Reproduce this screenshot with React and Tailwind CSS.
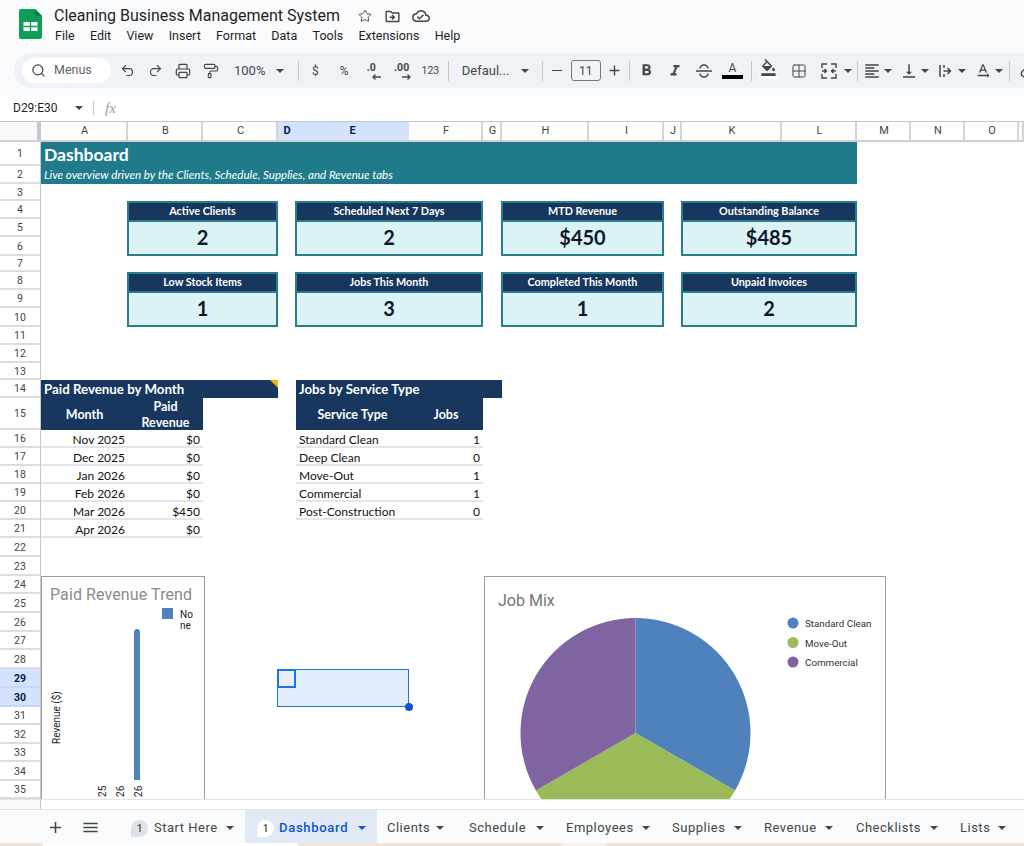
import React from "react";
import { Undo2, Redo2, Printer, PaintRoller, Search, Star, Grid2x2 } from "lucide-react";
import {
  MdOutlineDriveFileMove, MdOutlineCloudDone, MdFormatBold, MdFormatItalic, MdOutlineFormatColorFill,
  MdFormatAlignLeft, MdVerticalAlignBottom, MdTextRotationNone, MdAdd, MdMenu, MdLink,
} from "react-icons/md";

const Caret = ({ className = "text-[#444746]" }) => (
  <svg width="8" height="4" viewBox="0 0 8 4" className={"shrink-0 fill-current " + className}><path d="M0 0h8L4 4z" /></svg>
);
const Sep = ({ className }) => <div className={"w-px h-[20px] bg-[#c7c7c7] shrink-0 " + className} />;
const Box = ({ className = "w-[28px]", children }) => (
  <div className={"flex items-center justify-center shrink-0 h-full " + className}>{children}</div>
);

const MENUS = ["File", "Edit", "View", "Insert", "Format", "Data", "Tools", "Extensions", "Help"];
const ROWS = Array.from({ length: 35 }, (_, i) => i + 1);
const COLS = ["A", "B", "C", "D", "E", "F", "G", "H", "I", "J", "K", "L", "M", "N", "O", ""];

const MergeIcon = () => (
  <svg width="18" height="18" viewBox="0 0 18 18" fill="none" stroke="currentColor" strokeWidth="1.4">
    <path d="M2 6V2h5M11 2h5v4M2 12v4h5M11 16h5v-4" />
    <path d="M2 9h4M4.500 7l2 2-2 2M16 9h-4M13.500 7l-2 2 2 2" />
  </svg>
);
const StrikeIcon = () => (
  <svg width="20" height="18" viewBox="0 0 20 18" fill="none" stroke="currentColor" strokeWidth="1.5">
    <path d="M2 9h16M6 6.500a4 3.500 0 0 1 8 0M6 11.500a4 3.500 0 0 0 8 0" />
  </svg>
);
const WrapIcon = () => (
  <svg width="18" height="18" viewBox="0 0 18 18" fill="none" stroke="currentColor" strokeWidth="1.5">
    <path d="M3 3v12M6.500 9h7M10.500 6l3 3-3 3M7 3v3M7 12v3" />
  </svg>
);
const DecArrow = ({ dir }) => (
  <svg width="9" height="6" viewBox="0 0 9 6" fill="none" stroke="currentColor" strokeWidth="1.3" className="absolute bottom-[-6px] right-[-2px]">
    {dir === "l" ? <path d="M9 3H1M3.500 .5L1 3l2.500 2.500" /> : <path d="M0 3h8M5.500 .5L8 3 5.500 5.500" />}
  </svg>
);

function Toolbar() {
  return (
    <div className="ml-[14px] h-[35px] rounded-l-[18px] bg-[#eff3f8] flex items-center pl-[8px] overflow-hidden text-[#444746]">
      <div className="w-[89px] h-[25px] bg-white rounded-full flex items-center shrink-0 pl-[9px]">
        <Search size={15} strokeWidth={2} />
        <span className="ml-[8px] text-[12.5px] text-[#5f6368]">Menus</span>
      </div>
      <Box className="w-[2px]" />
      <Box><Undo2 size={15} strokeWidth={1.7} /></Box>
      <Box><Redo2 size={15} strokeWidth={1.7} /></Box>
      <Box><Printer size={16} strokeWidth={1.8} /></Box>
      <Box><PaintRoller size={16} strokeWidth={1.7} /></Box>
      <div className="w-[66px] h-full flex items-center pl-[9px] shrink-0 text-[13px]">
        <span>100%</span><Caret className="text-[#444746] ml-[11px]" />
      </div>
      <Sep className="ml-[7px] mr-[2px]" />
      <Box className="w-[28.75px]"><span className="text-[12px]">$</span></Box>
      <Box className="w-[28.75px]"><span className="text-[12px]">%</span></Box>
      <Box className="w-[28.75px]">
        <span className="relative text-[10.5px] font-bold leading-none pr-[3px] -mt-[4px]">.0<DecArrow dir="l" /></span>
      </Box>
      <Box className="w-[28.75px]">
        <span className="relative text-[10.5px] font-bold leading-none -mt-[4px]">.00<DecArrow dir="r" /></span>
      </Box>
      <Box className="w-[28.75px]"><span className="text-[10.5px]">123</span></Box>
      <Sep className="ml-[3px] mr-[13px]" />
      <div className="w-[68px] h-full flex items-center justify-between pr-[1px] shrink-0 text-[13px]">
        <span>Defaul...</span><Caret />
      </div>
      <Sep className="ml-[12px]" />
      <Box><span className="block w-[10px] h-[1.5px] bg-[#444746]" /></Box>
      <div className="w-[30px] h-[21px] border border-[#747775] rounded-[3px] flex items-center justify-center text-[12px] shrink-0">11</div>
      <Box className="w-[27px]"><MdAdd size={17} /></Box>
      <Sep className="ml-[1px] mr-[2px]" />
      <Box className="w-[28.75px]"><MdFormatBold size={19} /></Box>
      <Box className="w-[28.75px]"><MdFormatItalic size={18} /></Box>
      <Box className="w-[28.75px]"><StrikeIcon /></Box>
      <Box className="w-[28.75px]">
        <span className="flex flex-col items-center">
          <span className="text-[12px] leading-[13px]">A</span>
          <span className="block w-[21px] h-[4px] bg-black" />
        </span>
      </Box>
      <Sep className="ml-[4px] mr-[2px]" />
      <Box className="w-[30px]">
        <span className="flex flex-col items-center -mt-[4px]">
          <MdOutlineFormatColorFill size={17} />
          <span className="block w-[20px] h-[3px] bg-white" />
        </span>
      </Box>
      <Box className="w-[30px]"><Grid2x2 size={16} strokeWidth={1.5} /></Box>
      <Box className="w-[30px]"><MergeIcon /></Box>
      <Box className="w-[8px]"><Caret /></Box>
      <Sep className="ml-[5px] mr-[2px]" />
      <Box className="w-[24px]"><MdFormatAlignLeft size={18} /></Box>
      <Box className="w-[13px] justify-start"><Caret /></Box>
      <Box className="w-[24px]"><MdVerticalAlignBottom size={18} /></Box>
      <Box className="w-[13px] justify-start"><Caret /></Box>
      <Box className="w-[24px]"><WrapIcon /></Box>
      <Box className="w-[13px] justify-start"><Caret /></Box>
      <Box className="w-[24px]"><MdTextRotationNone size={18} /></Box>
      <Box className="w-[13px] justify-start"><Caret /></Box>
      <Sep className="ml-[1px] mr-[8px]" />
      <MdLink size={18} className="shrink-0 -rotate-45" />
    </div>
  );
}

function TopBar() {
  return (
    <div className="bg-[#f9fbfd] h-[95px] overflow-hidden" >
      <div className="h-[53px] flex pl-[19px] pt-[9px]">
        <svg width="23" height="30" viewBox="0 0 23 30" className="shrink-0">
          <path d="M2 0h14l7 7v21a2 2 0 0 1-2 2H2a2 2 0 0 1-2-2V2a2 2 0 0 1 2-2z" fill="#0f9d58" />
          <path d="M16 0l7 7h-5a2 2 0 0 1-2-2z" fill="#0a7a43" />
          <path d="M4.500 13h14v9h-14z" fill="#fff" />
          <path d="M11.500 13v9M4.500 17.500h14" stroke="#0f9d58" strokeWidth="1.3" />
        </svg>
        <div className="ml-[12px] flex flex-col">
          <div className="flex items-center h-[14px]">
            <span className="text-[16px] leading-[14px] text-[#1f1f1f] whitespace-nowrap">Cleaning Business Management System</span>
            <Star size={14} strokeWidth={1.6} className="ml-[18px] text-[#444746]" />
            <MdOutlineDriveFileMove size={17} className="ml-[12px] text-[#444746]" />
            <MdOutlineCloudDone size={18} className="ml-[11px] text-[#444746]" />
          </div>
          <div className="flex gap-[15.3px] mt-[5px] pl-[1px] text-[12.5px] leading-[16px] text-[#1f1f1f]">
            {MENUS.map((m) => <span key={m}>{m}</span>)}
          </div>
        </div>
      </div>
      <Toolbar />
    </div>
  );
}

function FormulaBar() {
  return (
    <div className="h-[26px] bg-white flex items-center text-[#1f1f1f]">
      <span className="ml-[13px] w-[62px] text-[12px]">D29:E30</span>
      <Caret className="text-[#444746]" />
      <div className="ml-[10px] w-px h-[14px] bg-[#c7c7c7]" />
      <span className="ml-[11px] text-[15px] italic text-[#9aa0a6] font-['Liberation_Serif',serif]">fx</span>
    </div>
  );
}

const CALIBRI = "font-['Lato','Open_Sans',sans-serif]";

function Card({ pos, label, value }) {
  return (
    <div className={"flex flex-col border-2 border-[#2a7d8f] bg-[#dcf3f6] -ml-px " + pos}>
      <div className="h-[17px] shrink-0 bg-[#17375e] border-b-2 border-[#2a7d8f] box-content -mb-[1px] flex items-center justify-center text-white font-bold text-[10.8px] leading-none">{label}</div>
      <div className="flex-1 flex items-center justify-center text-[20px] font-bold text-[#0f172a] leading-none pb-[2px]">{value}</div>
    </div>
  );
}

const MONTHS = [
  ["Nov 2025", "$0", "row-[17]"], ["Dec 2025", "$0", "row-[18]"], ["Jan 2026", "$0", "row-[19]"],
  ["Feb 2026", "$0", "row-[20]"], ["Mar 2026", "$450", "row-[21]"], ["Apr 2026", "$0", "row-[22]"],
];
const SERVICES = [
  ["Standard Clean", 1, "row-[17]"], ["Deep Clean", 0, "row-[18]"], ["Move-Out", 1, "row-[19]"],
  ["Commercial", 1, "row-[20]"], ["Post-Construction", 0, "row-[21]"],
];
const rowLine = "border-b-2 border-[#e3e5ea] flex items-center text-[12px] text-[#111] leading-none pt-[3px]";

function Chart1() {
  return (
    <div className="absolute left-[41px] top-[455px] w-[164px] h-[300px] bg-white border border-[#9e9e9e]">
      <svg width="162" height="298" className="font-['Roboto',sans-serif]">
        <text x="8" y="23" fontSize="16" fill="#8a8a8a" letterSpacing="0.1">Paid Revenue Trend</text>
        <rect x="120" y="31" width="11" height="11" fill="#4f81bd" />
        <text x="138" y="41" fontSize="10" fill="#222">No</text>
        <text x="138" y="52" fontSize="10" fill="#222">ne</text>
        <text transform="translate(18 167) rotate(-90)" fontSize="10" fill="#222">Revenue ($)</text>
        <path d="M92 203V55a3 3 0 0 1 6 0v148z" fill="#4f81bd" />
        <text transform="translate(64 228) rotate(-90)" fontSize="10" fill="#222">0 25</text>
        <text transform="translate(82 228) rotate(-90)" fontSize="10" fill="#222">0 26</text>
        <text transform="translate(100 228) rotate(-90)" fontSize="10" fill="#222">0 26</text>
      </svg>
    </div>
  );
}

function Chart2() {
  return (
    <div className="absolute left-[484px] top-[455px] w-[402px] h-[300px] bg-white border border-[#9e9e9e]">
      <svg width="400" height="298" className="font-['Roboto',sans-serif]">
        <text x="13" y="29" fontSize="16" fill="#757575">Job Mix</text>
        <path d="M150.500 156V41A115 115 0 0 1 250.100 213.500z" fill="#4f81bd" />
        <path d="M150.500 156L250.100 213.500A115 115 0 0 1 50.900 213.500z" fill="#9bbb59" />
        <path d="M150.500 156L50.900 213.500A115 115 0 0 1 150.500 41z" fill="#8064a2" />
        <circle cx="308" cy="46" r="5.500" fill="#4f81bd" />
        <text x="320" y="50" fontSize="9.800" fill="#333">Standard Clean</text>
        <circle cx="308" cy="65.500" r="5.500" fill="#9bbb59" />
        <text x="320" y="69.500" fontSize="9.800" fill="#333">Move-Out</text>
        <circle cx="308" cy="85" r="5.500" fill="#8064a2" />
        <text x="320" y="89" fontSize="9.800" fill="#333">Commercial</text>
      </svg>
    </div>
  );
}

function Sheet() {
  return (
    <div className="relative h-[678px] overflow-hidden bg-white grid grid-cols-[41px_87px_75px_75px_18px_113px_74px_19px_87px_75px_18px_100px_75px_54px_54px_54px_1fr] grid-rows-[21px_24px_18px_17px_18px_18px_19px_16px_18px_18px_19px_18px_18px_17px_18px_32px_18px_18px_18px_18px_18px_18px_19px_19px_18px_19px_19px_18px_19px_19px_19px_18px_19px_18px_19px_18px]">
      {/* column header */}
      <div className="col-[1/18] row-[1] grid grid-cols-subgrid border-t border-[#c7c7c7] border-b-2 border-b-[#d0d0d0]">
        <div className="bg-[#f8f9fa] border-r-[4px] border-[#c7c7c7]" />
        {COLS.map((c, i) => (
          <div
            key={i}
            className={
              "flex items-center justify-center text-[11px] border-r-2 pl-[2px] pt-px " +
              (c === "D" || c === "E"
                ? "bg-[#d3e3fd] text-[#041e49] font-bold border-[#d3e3fd]"
                : "text-[#444] border-[#d4d4d4]")
            }
          >
            {c}
          </div>
        ))}
      </div>
      {/* row header */}
      <div className="col-[1] row-[2/37] grid grid-rows-subgrid border-r border-[#c7c7c7]">
        {ROWS.map((r) => (
          <div
            key={r}
            className={
              "flex items-center justify-center text-[10.5px] border-b-2 pt-[2px] " +
              (r === 29 || r === 30
                ? "bg-[#d3e3fd] text-[#041e49] font-bold border-[#c5d8f6]"
                : "bg-white text-[#444] border-[#dcdcdc]")
            }
          >
            {r}
          </div>
        ))}
      </div>

      <div className={"col-[2/14] row-[2] bg-[#1f7a8c] text-white font-bold text-[17.5px] flex items-center pl-[3px] pt-[2px] leading-none " + CALIBRI}>Dashboard</div>
      <div className={"col-[2/14] row-[3] bg-[#1f7a8c] text-white italic text-[11.6px] flex items-center pl-[3px] leading-none " + CALIBRI}>Live overview driven by the Clients, Schedule, Supplies, and Revenue tabs</div>

      <div className={"contents " + CALIBRI}>
        <Card pos={"col-[3/5] row-[5/8] " + CALIBRI} label="Active Clients" value="2" />
        <Card pos={"col-[6/8] row-[5/8] " + CALIBRI} label="Scheduled Next 7 Days" value="2" />
        <Card pos={"col-[9/11] row-[5/8] " + CALIBRI} label="MTD Revenue" value="$450" />
        <Card pos={"col-[12/14] row-[5/8] " + CALIBRI} label="Outstanding Balance" value="$485" />
        <Card pos={"col-[3/5] row-[9/12] " + CALIBRI} label="Low Stock Items" value="1" />
        <Card pos={"col-[6/8] row-[9/12] " + CALIBRI} label="Jobs This Month" value="3" />
        <Card pos={"col-[9/11] row-[9/12] " + CALIBRI} label="Completed This Month" value="1" />
        <Card pos={"col-[12/14] row-[9/12] " + CALIBRI} label="Unpaid Invoices" value="2" />
      </div>

      {/* Paid revenue table */}
      <div className={"relative col-[2/5] row-[15] bg-[#17375e] text-white font-bold text-[13.3px] flex items-center pl-[3px] pt-[2px] leading-none " + CALIBRI}>
        Paid Revenue by Month
        <span className="absolute top-0 right-0 w-0 h-0 border-t-[8px] border-l-[8px] border-t-[#f4b400] border-l-transparent" />
      </div>
      <div className={"col-[2] row-[16] bg-[#17375e] text-white font-bold text-[12.5px] flex items-center justify-center pt-[2px] leading-none " + CALIBRI}>Month</div>
      <div className={"col-[3] row-[16] bg-[#17375e] text-white font-bold text-[12.5px] flex items-center justify-center text-center pt-[2px] leading-[16px] " + CALIBRI}>Paid<br />Revenue</div>
      {MONTHS.map(([m, v, row]) => (
        <React.Fragment key={m}>
          <div className={"col-[2] justify-end pr-[3px] " + rowLine + " " + row + " " + CALIBRI}>{m}</div>
          <div className={"col-[3] justify-end pr-[3px] " + rowLine + " " + row + " " + CALIBRI}>{v}</div>
        </React.Fragment>
      ))}

      {/* Jobs table */}
      <div className={"col-[6/9] row-[15] bg-[#17375e] text-white font-bold text-[13.2px] flex items-center pl-[3px] pt-[2px] leading-none " + CALIBRI}>Jobs by Service Type</div>
      <div className={"col-[6] row-[16] bg-[#17375e] text-white font-bold text-[12.5px] flex items-center justify-center pt-[2px] leading-none " + CALIBRI}>Service Type</div>
      <div className={"col-[7] row-[16] bg-[#17375e] text-white font-bold text-[12.5px] flex items-center justify-center pt-[2px] leading-none " + CALIBRI}>Jobs</div>
      {SERVICES.map(([s, v, row]) => (
        <React.Fragment key={s}>
          <div className={"col-[6] pl-[3px] " + rowLine + " " + row + " " + CALIBRI}>{s}</div>
          <div className={"col-[7] justify-end pr-[3px] " + rowLine + " " + row + " " + CALIBRI}>{v}</div>
        </React.Fragment>
      ))}

      {/* selection */}
      <div className="relative col-[5/7] row-[30/32] bg-[#e4edfc] border border-[#1a73e8] -ml-px">
        <div className="absolute -top-px -left-px w-[19px] h-[19px] border-2 border-[#1a73e8] bg-[#e9eff9]" />
        <div className="absolute -bottom-[4.5px] -right-[4.5px] w-[8px] h-[8px] rounded-full bg-[#0b57d0]" />
      </div>

      <Chart1 />
      <Chart2 />
    </div>
  );
}

function Tab({ className, label, caretClass = "" }) {
  return (
    <div className={"flex items-center h-full pl-[10px] pt-[3px] shrink-0 " + className}>
      <span className="text-[13px] tracking-[0.5px] text-[#444746]">{label}</span>
      <span className={"ml-auto " + caretClass}><Caret /></span>
    </div>
  );
}

function BottomBar() {
  return (
    <>
      <div className="h-[11px] bg-white border-t border-b border-[#e3e3e3] flex">
        <div className="w-[41px] h-full bg-[#f8f9fa] border-r border-[#c7c7c7]" />
      </div>
      <div className="h-[33px] bg-[#f9fbfd] flex items-center text-[#444746] overflow-hidden">
        <Box className="w-[28px] ml-[41px] pt-[2px]"><MdAdd size={19} /></Box>
        <Box className="w-[28px] ml-[7px] pt-[2px]"><MdMenu size={19} /></Box>
        <div className="ml-[19px] w-[122px] pl-[8px] pr-[11px] pt-[3px] h-full flex items-center shrink-0">
          <span className="w-[17px] h-[17px] rounded-full rounded-bl-none bg-[#dde3ea] flex items-center justify-center text-[10px] font-medium">1</span>
          <span className="ml-[6px] text-[13px] tracking-[0.5px]">Start Here</span>
          <span className="ml-auto"><Caret /></span>
        </div>
        <div className="w-[132px] pl-[12px] pr-[11px] pt-[3px] h-full flex items-center bg-[#e1e9f7] shrink-0">
          <span className="w-[17px] h-[17px] rounded-full rounded-bl-none bg-white flex items-center justify-center text-[10px] font-medium">1</span>
          <span className="ml-[5px] text-[13px] font-medium tracking-[0.7px] text-[#0b57d0]">Dashboard</span>
          <span className="ml-auto"><Caret className="text-[#0b57d0]" /></span>
        </div>
        <Tab className="w-[82px]" label="Clients" caretClass="mr-[15px]" />
        <Tab className="w-[97px]" label="Schedule" caretClass="mr-[12px]" />
        <Tab className="w-[106px]" label="Employees" caretClass="mr-[12px]" />
        <Tab className="w-[92px]" label="Supplies" caretClass="mr-[12px]" />
        <Tab className="w-[92px]" label="Revenue" caretClass="mr-[13px]" />
        <Tab className="w-[104px]" label="Checklists" caretClass="mr-[12px]" />
        <Tab className="w-[68px]" label="Lists" caretClass="mr-[12px]" />
      </div>
      <div className="h-[3px] flex bg-[#f1e5dc]">
        <div className="w-[43px]" />
        <div className="w-[255px] bg-white" />
        <div className="w-[264px]" />
        <div className="w-[43px] bg-[#f8f3ef]" />
      </div>
    </>
  );
}

export default function App() {
  return (
    <div className="w-[1024px] h-[846px] overflow-hidden bg-white font-['Roboto',sans-serif]">
      <TopBar />
      <FormulaBar />
      <Sheet />
      <BottomBar />
    </div>
  );
}
